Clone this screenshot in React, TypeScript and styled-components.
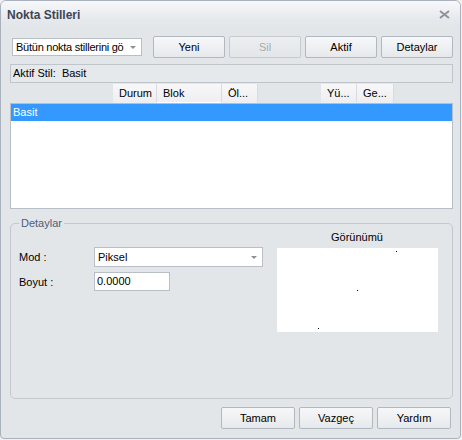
import styled, { createGlobalStyle } from "styled-components";

const GlobalStyle = createGlobalStyle`
    html, body {
        margin: 0;
        padding: 0;
        background: #f0f1f3;
    }
    body {
        font-family: "Liberation Sans", Arial, sans-serif;
        font-size: 11px;
        color: #000;
    }
`;

const StyledWindow = styled.div`
    width: 461px;
    height: 439px;
    box-sizing: border-box;
    border: 1px solid #a9b1bc;
    border-radius: 6px 6px 4px 4px;
    background: #e3e6e9;
    display: flex;
    flex-direction: column;
    overflow: hidden;
`;

const StyledTitleBar = styled.div`
    height: 27px;
    flex: none;
    display: flex;
    align-items: center;
    justify-content: space-between;
    padding: 0 10px 0 6px;
    background: linear-gradient(#f7f8fa, #e5e8ec 70%, #e3e6e9);
`;

const StyledTitle = styled.span`
    font-weight: bold;
    font-size: 12px;
    color: #3c4654;
`;

const StyledClose = styled.svg`
    width: 11px;
    height: 9px;
`;

const StyledBody = styled.div`
    flex: 1;
    display: flex;
    flex-direction: column;
    padding: 8px 7px 0 9px;
`;

const StyledToolbar = styled.div`
    display: flex;
    align-items: center;
    height: 22px;
`;

const StyledCombo = styled.div<{ $width: number; $height: number }>`
    width: ${(p) => p.$width}px;
    height: ${(p) => p.$height}px;
    box-sizing: border-box;
    background: #fff;
    border: 1px solid #b9bfc7;
    display: flex;
    align-items: center;
    justify-content: space-between;
    padding: 0 5px 0 3px;
    white-space: nowrap;
    overflow: hidden;
`;

const StyledComboText = styled.span<{ $tight?: boolean }>`
    overflow: hidden;
    flex: 1;
    letter-spacing: ${(p) => (p.$tight ? "-0.25px" : "normal")};
`;

const StyledArrow = styled.span`
    flex: none;
    width: 0;
    height: 0;
    margin-left: 2px;
    border-left: 3px solid transparent;
    border-right: 3px solid transparent;
    border-top: 3px solid #8b9098;
`;

const StyledButtons = styled.div`
    display: flex;
    gap: 4px;
    margin-left: auto;
`;

const StyledButton = styled.button<{ $disabled?: boolean }>`
    width: 72px;
    height: 22px;
    box-sizing: border-box;
    padding: 0;
    font: inherit;
    color: ${(p) => (p.$disabled ? "#a6aab0" : "#000")};
    background: ${(p) =>
        p.$disabled
            ? "linear-gradient(#eceef0, #e3e6e9)"
            : "linear-gradient(#f6f7f8, #e6e9ec)"};
    border: 1px solid ${(p) => (p.$disabled ? "#c6cbd1" : "#b1b8c1")};
    border-radius: 2px;
`;

const StyledStatus = styled.div`
    margin-top: 6px;
    height: 19px;
    box-sizing: border-box;
    border: 1px solid #c0c5cc;
    background: #e6e9ec;
    padding: 2px 2px 0;
    white-space: pre;
`;

const StyledHeader = styled.div`
    display: flex;
    height: 19px;
    margin-top: 1px;
    padding-left: 103px;
`;

const StyledColumn = styled.div<{ $width: number; $gapBefore?: number; $sorted?: boolean }>`
    width: ${(p) => p.$width}px;
    margin-left: ${(p) => p.$gapBefore ?? 0}px;
    box-sizing: border-box;
    padding: 3px 0 0 6px;
    white-space: nowrap;
    overflow: hidden;
    background: linear-gradient(#f8f8f9, #eeeff1);
    border-right: 1px solid #d9dcdf;
    border-bottom: 1px solid ${(p) => (p.$sorted ? "#ffffff" : "#eeeff1")};
`;

const StyledList = styled.div`
    height: 106px;
    box-sizing: border-box;
    border: 1px solid #b7bec7;
    background: #fff;
`;

const StyledRow = styled.div<{ $selected?: boolean }>`
    height: 17px;
    padding: 2px 0 0 2px;
    box-sizing: border-box;
    background: ${(p) => (p.$selected ? "#3399ff" : "transparent")};
    color: ${(p) => (p.$selected ? "#fff" : "#000")};
`;

const StyledGroup = styled.fieldset`
    margin: 8px 0 0;
    height: 182px;
    box-sizing: border-box;
    border: 1px solid #c3c8cf;
    border-radius: 5px;
    padding: 0 15px 0 8px;
    display: grid;
    grid-template-columns: 1fr 162px;
    column-gap: 13px;
    min-width: 0;
`;

const StyledLegend = styled.legend`
    padding: 0 2px;
    margin-left: 0;
    color: #4d5d7a;
`;

const StyledForm = styled.div`
    display: grid;
    grid-template-columns: 75px 169px;
    grid-auto-rows: min-content;
    row-gap: 5px;
    align-items: center;
    padding-top: 18px;
`;

const StyledLabel = styled.span``;

const StyledInput = styled.div`
    width: 76px;
    height: 19px;
    box-sizing: border-box;
    border: 1px solid #b9bfc7;
    background: #fff;
    padding: 2px 2px 0;
`;

const StyledPreviewWrap = styled.div`
    display: flex;
    flex-direction: column;
    align-items: center;
`;

const StyledPreviewTitle = styled.div`
    height: 17px;
    margin-top: 2px;
`;

const StyledPreview = styled.svg`
    width: 161px;
    height: 84px;
    background: #fff;
    display: block;
`;

const StyledFooter = styled.div`
    display: flex;
    justify-content: flex-end;
    gap: 4px;
    margin-top: 8px;
    padding-right: 2px;
`;

const FooterButton = styled(StyledButton)`
    width: 74px;
`;

export default function App() {
    return (
        <>
            <GlobalStyle />
            <StyledWindow>
                <StyledTitleBar>
                    <StyledTitle>Nokta Stilleri</StyledTitle>
                    <StyledClose viewBox="0 0 11 9">
                        <path
                            d="M1 1 L10 8 M10 1 L1 8"
                            stroke="#8e949c"
                            strokeWidth="2"
                        />
                    </StyledClose>
                </StyledTitleBar>
                <StyledBody>
                    <StyledToolbar>
                        <StyledCombo $width={130} $height={18} style={{ marginLeft: 2 }}>
                            <StyledComboText $tight>Bütün nokta stillerini gö</StyledComboText>
                            <StyledArrow />
                        </StyledCombo>
                        <StyledButtons>
                            <StyledButton>Yeni</StyledButton>
                            <StyledButton $disabled>Sil</StyledButton>
                            <StyledButton>Aktif</StyledButton>
                            <StyledButton>Detaylar</StyledButton>
                        </StyledButtons>
                    </StyledToolbar>
                    <StyledStatus>Aktif Stil:  Basit</StyledStatus>
                    <StyledHeader>
                        <StyledColumn $width={44}>Durum</StyledColumn>
                        <StyledColumn $width={65} $sorted>Blok</StyledColumn>
                        <StyledColumn $width={36}>Öl...</StyledColumn>
                        <StyledColumn $width={36} $gapBefore={63}>Yü...</StyledColumn>
                        <StyledColumn $width={37}>Ge...</StyledColumn>
                    </StyledHeader>
                    <StyledList>
                        <StyledRow $selected>Basit</StyledRow>
                    </StyledList>
                    <StyledGroup>
                        <StyledLegend>Detaylar</StyledLegend>
                        <StyledForm>
                            <StyledLabel>Mod :</StyledLabel>
                            <StyledCombo $width={169} $height={20}>
                                <StyledComboText>Piksel</StyledComboText>
                                <StyledArrow />
                            </StyledCombo>
                            <StyledLabel>Boyut :</StyledLabel>
                            <StyledInput>0.0000</StyledInput>
                        </StyledForm>
                        <StyledPreviewWrap>
                            <StyledPreviewTitle>Görünümü</StyledPreviewTitle>
                            <StyledPreview viewBox="0 0 161 84">
                                <rect x="119" y="3" width="1" height="1" fill="#000" />
                                <rect x="80" y="42" width="1" height="1" fill="#000" />
                                <rect x="41" y="80" width="1" height="1" fill="#000" />
                            </StyledPreview>
                        </StyledPreviewWrap>
                    </StyledGroup>
                    <StyledFooter>
                        <FooterButton>Tamam</FooterButton>
                        <FooterButton>Vazgeç</FooterButton>
                        <FooterButton>Yardım</FooterButton>
                    </StyledFooter>
                </StyledBody>
            </StyledWindow>
        </>
    );
}
